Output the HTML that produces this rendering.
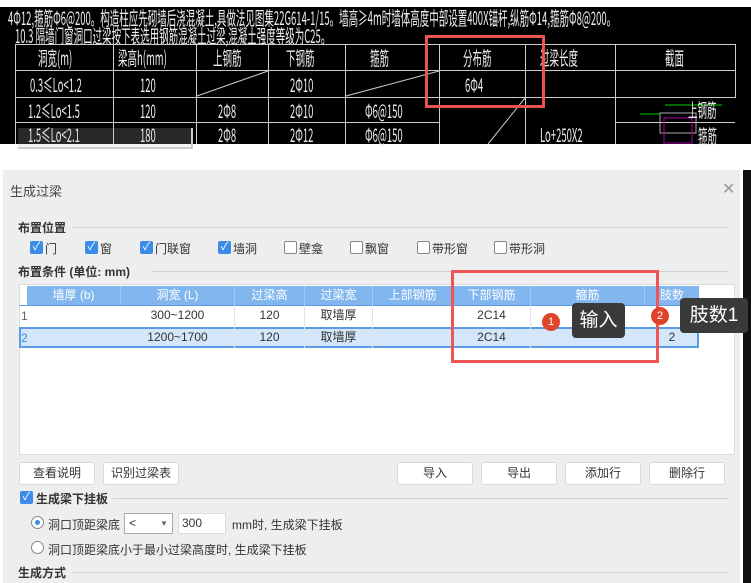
<!DOCTYPE html><html><head><meta charset="utf-8"><style>
*{margin:0;padding:0;box-sizing:border-box}
body{width:751px;height:583px;background:#fff;position:relative;overflow:hidden;font-family:"Liberation Sans","Noto Sans CJK SC",sans-serif;font-size:12px;color:#333}
.a{position:absolute}
.cad{left:0;top:7px;width:751px;height:137px;background:#000}
.ct{position:absolute;color:#eee;font-family:"Noto Sans CJK SC",sans-serif;font-size:19px;transform:scaleX(.5);transform-origin:left top;white-space:nowrap;line-height:1}
.hl{position:absolute;height:1px;background:#ccc}
.vl{position:absolute;width:1px;background:#ccc}
.dlg{left:3px;top:170px;width:737px;height:413px;background:#eeeeee}
.cb{position:absolute;width:13px;height:13px;border:1px solid #888;background:#fff;border-radius:2px}
.cb.on{background:#3c8ce7;border-color:#3c8ce7;color:#fff;font-size:11px;line-height:11px;text-align:center}
.lbl{position:absolute;font-size:12px;white-space:nowrap}
.th{position:absolute;top:286px;height:19px;color:#fff;text-align:center;line-height:19px;font-size:12px;border-right:1px solid #a6c9f2}
.td{position:absolute;height:21px;line-height:21px;text-align:center;font-size:12px;border-right:1px solid #e2e2e2}
.btn{position:absolute;top:462px;height:23px;width:76px;background:#fff;border:1px solid #d8d8d8;border-radius:3px;text-align:center;line-height:21px;font-size:12px}
.sep{position:absolute;height:1px;background:#cfcfcf}
</style></head><body>
<div class="a cad"></div>
<div class="ct" style="left:8px;top:8px">4Φ12,箍筋Φ6@200。构造柱应先砌墙后浇混凝土,具做法见图集22G614-1/15。墙高≥4m时墙体高度中部设置400X锚杆,纵筋Φ14,箍筋Φ8@200。</div>
<div class="ct" style="left:15px;top:26px">10.3  隔墙门窗洞口过梁按下表选用钢筋混凝土过梁,混凝土强度等级为C25。</div>
<div class="hl" style="left:15px;top:44px;width:720px"></div>
<div class="hl" style="left:15px;top:70px;width:720px"></div>
<div class="hl" style="left:15px;top:97px;width:720px"></div>
<div class="hl" style="left:15px;top:122px;width:425px"></div>
<div class="hl" style="left:615px;top:122px;width:120px"></div>
<div class="vl" style="left:15px;top:44px;height:100px"></div>
<div class="vl" style="left:113px;top:44px;height:100px"></div>
<div class="vl" style="left:196px;top:44px;height:100px"></div>
<div class="vl" style="left:268px;top:44px;height:100px"></div>
<div class="vl" style="left:345px;top:44px;height:100px"></div>
<div class="vl" style="left:439px;top:44px;height:100px"></div>
<div class="vl" style="left:525px;top:44px;height:100px"></div>
<div class="vl" style="left:615px;top:44px;height:100px"></div>
<div class="vl" style="left:735px;top:44px;height:54px"></div>
<svg class="a" style="left:0;top:0" width="751" height="145"><g stroke="#ccc"><line x1="197" y1="96" x2="268" y2="71"/><line x1="346" y1="96" x2="439" y2="71"/><line x1="488" y1="144" x2="525" y2="98"/></g>
<rect x="660" y="113" width="36" height="20" fill="none" stroke="#aaa"/><line x1="640" y1="114" x2="660" y2="114" stroke="#0c0"/><line x1="665" y1="105" x2="722" y2="105" stroke="#0c0"/><rect x="664" y="118" width="28" height="25" fill="none" stroke="#a0a"/></svg>
<div class="ct" style="left:38px;top:48px">洞宽(m)</div><div class="ct" style="left:118px;top:48px">梁高h(mm)</div><div class="ct" style="left:213px;top:48px">上钢筋</div><div class="ct" style="left:286px;top:48px">下钢筋</div><div class="ct" style="left:370px;top:48px">箍筋</div><div class="ct" style="left:463px;top:48px">分布筋</div><div class="ct" style="left:540px;top:48px">过梁长度</div><div class="ct" style="left:665px;top:48px">截面</div>
<div class="ct" style="left:30px;top:75px">0.3≤Lo&lt;1.2</div><div class="ct" style="left:140px;top:75px">120</div><div class="ct" style="left:290px;top:75px">2Φ10</div><div class="ct" style="left:465px;top:75px">6Φ4</div>
<div class="ct" style="left:28px;top:101px">1.2≤Lo&lt;1.5</div><div class="ct" style="left:140px;top:101px">120</div><div class="ct" style="left:218px;top:101px">2Φ8</div><div class="ct" style="left:290px;top:101px">2Φ10</div><div class="ct" style="left:365px;top:101px">Φ6@150</div><div class="ct" style="left:688px;top:100px">上钢筋</div>
<div class="ct" style="left:28px;top:125px">1.5≤Lo&lt;2.1</div><div class="ct" style="left:140px;top:125px">180</div><div class="ct" style="left:218px;top:125px">2Φ8</div><div class="ct" style="left:290px;top:125px">2Φ12</div><div class="ct" style="left:365px;top:125px">Φ6@150</div><div class="ct" style="left:540px;top:125px">Lo+250X2</div><div class="ct" style="left:698px;top:126px">箍筋</div>
<div class="a" style="left:18px;top:128px;width:175px;height:21px;background:rgba(200,200,200,.2);border-bottom:2px solid #ccc;border-right:2px solid #ccc"></div>
<div class="a" style="left:425px;top:35px;width:120px;height:73px;border:3px solid #e85454"></div>
<div class="a" style="left:743px;top:170px;width:8px;height:413px;background:#111"></div>
<div class="a dlg"></div>
<div class="lbl" style="left:10px;top:181px;font-size:13px;color:#444">生成过梁</div>
<div class="lbl" style="left:722px;top:179px;font-size:16px;color:#999">✕</div>
<div class="lbl" style="left:18px;top:219px;font-weight:bold">布置位置</div><div class="sep" style="left:72px;top:227px;width:656px"></div>
<div class="cb on" style="left:30px;top:241px">✓</div><div class="lbl" style="left:45px;top:240px">门</div>
<div class="cb on" style="left:85px;top:241px">✓</div><div class="lbl" style="left:100px;top:240px">窗</div>
<div class="cb on" style="left:140px;top:241px">✓</div><div class="lbl" style="left:155px;top:240px">门联窗</div>
<div class="cb on" style="left:218px;top:241px">✓</div><div class="lbl" style="left:233px;top:240px">墙洞</div>
<div class="cb" style="left:284px;top:241px"></div><div class="lbl" style="left:299px;top:240px">壁龛</div>
<div class="cb" style="left:350px;top:241px"></div><div class="lbl" style="left:365px;top:240px">飘窗</div>
<div class="cb" style="left:417px;top:241px"></div><div class="lbl" style="left:432px;top:240px">带形窗</div>
<div class="cb" style="left:494px;top:241px"></div><div class="lbl" style="left:509px;top:240px">带形洞</div>
<div class="lbl" style="left:18px;top:263px;font-weight:bold">布置条件 (单位: mm)</div><div class="sep" style="left:152px;top:271px;width:576px"></div>
<div class="a" style="left:19px;top:284px;width:716px;height:171px;background:#fff;border:1px solid #ddd"></div>
<div class="a" style="left:27px;top:286px;width:672px;height:19px;background:#82b6ef"></div>
<div class="th" style="left:27px;width:94px">墙厚 (b)</div><div class="th" style="left:121px;width:114px">洞宽 (L)</div><div class="th" style="left:235px;width:70px">过梁高</div><div class="th" style="left:305px;width:68px">过梁宽</div><div class="th" style="left:373px;width:80px">上部钢筋</div><div class="th" style="left:453px;width:78px">下部钢筋</div><div class="th" style="left:531px;width:114px">箍筋</div><div class="th" style="left:645px;width:54px;border:none">肢数</div>
<div class="a" style="left:19px;top:305px;width:680px;height:1px;background:#5a9de6"></div>
<div class="a" style="left:19px;top:327px;width:680px;height:21px;background:#d4e6fa;border:2px solid #5a9de6"></div>
<div class="lbl" style="left:21px;top:309px;color:#666">1</div><div class="lbl" style="left:21px;top:331px;color:#3c8ce7">2</div>
<div class="td" style="left:121px;top:305px;width:114px">300~1200</div><div class="td" style="left:235px;top:305px;width:70px">120</div><div class="td" style="left:305px;top:305px;width:68px">取墙厚</div><div class="td" style="left:453px;top:305px;width:78px">2C14</div>
<div class="td" style="left:121px;top:327px;width:114px">1200~1700</div><div class="td" style="left:235px;top:327px;width:70px">120</div><div class="td" style="left:305px;top:327px;width:68px">取墙厚</div><div class="td" style="left:453px;top:327px;width:78px">2C14</div><div class="td" style="left:645px;top:327px;width:54px;border:none">2</div>
<div class="a" style="left:451px;top:270px;width:208px;height:93px;border:3px solid #ee5555"></div>
<div class="a" style="left:542px;top:313px;width:18px;height:18px;border-radius:50%;background:#e0452a;color:#fff;text-align:center;line-height:18px;font-size:11px">1</div>
<div class="a" style="left:566px;top:316px;width:0;height:0;border:6px solid transparent;border-right-color:#333"></div>
<div class="a" style="left:572px;top:303px;width:53px;height:35px;background:#3a3a3a;border-radius:4px;color:#fff;font-size:19px;text-align:center;line-height:35px">输入</div>
<div class="a" style="left:651px;top:307px;width:18px;height:18px;border-radius:50%;background:#e0452a;color:#fff;text-align:center;line-height:18px;font-size:11px">2</div>
<div class="a" style="left:674px;top:310px;width:0;height:0;border:6px solid transparent;border-right-color:#333"></div>
<div class="a" style="left:680px;top:298px;width:68px;height:35px;background:#3a3a3a;border-radius:4px;color:#fff;font-size:19px;text-align:center;line-height:35px">肢数1</div>
<div class="btn" style="left:19px">查看说明</div><div class="btn" style="left:103px">识别过梁表</div><div class="btn" style="left:397px">导入</div><div class="btn" style="left:481px">导出</div><div class="btn" style="left:565px">添加行</div><div class="btn" style="left:649px">删除行</div>
<div class="cb on" style="left:20px;top:491px">✓</div><div class="lbl" style="left:36px;top:490px;font-weight:bold">生成梁下挂板</div><div class="sep" style="left:113px;top:498px;width:615px"></div>
<div class="a" style="left:31px;top:516px;width:13px;height:13px;border-radius:50%;border:1px solid #888;background:#fff"></div><div class="a" style="left:35px;top:520px;width:5px;height:5px;border-radius:50%;background:#3c8ce7"></div>
<div class="lbl" style="left:48px;top:516px">洞口顶距梁底</div>
<div class="a" style="left:124px;top:513px;width:49px;height:21px;background:#fff;border:1px solid #aaa;padding-left:4px;line-height:19px">&lt;<span style="position:absolute;left:35px;font-size:8px;color:#666">▼</span></div>
<div class="a" style="left:178px;top:513px;width:48px;height:21px;background:#fff;border:1px solid #ddd;padding-left:3px;line-height:19px">300</div>
<div class="lbl" style="left:232px;top:516px">mm时, 生成梁下挂板</div>
<div class="a" style="left:31px;top:541px;width:13px;height:13px;border-radius:50%;border:1px solid #888;background:#fff"></div>
<div class="lbl" style="left:48px;top:541px">洞口顶距梁底小于最小过梁高度时, 生成梁下挂板</div>
<div class="lbl" style="left:18px;top:564px;font-weight:bold">生成方式</div><div class="sep" style="left:72px;top:572px;width:656px"></div>
</body></html>
